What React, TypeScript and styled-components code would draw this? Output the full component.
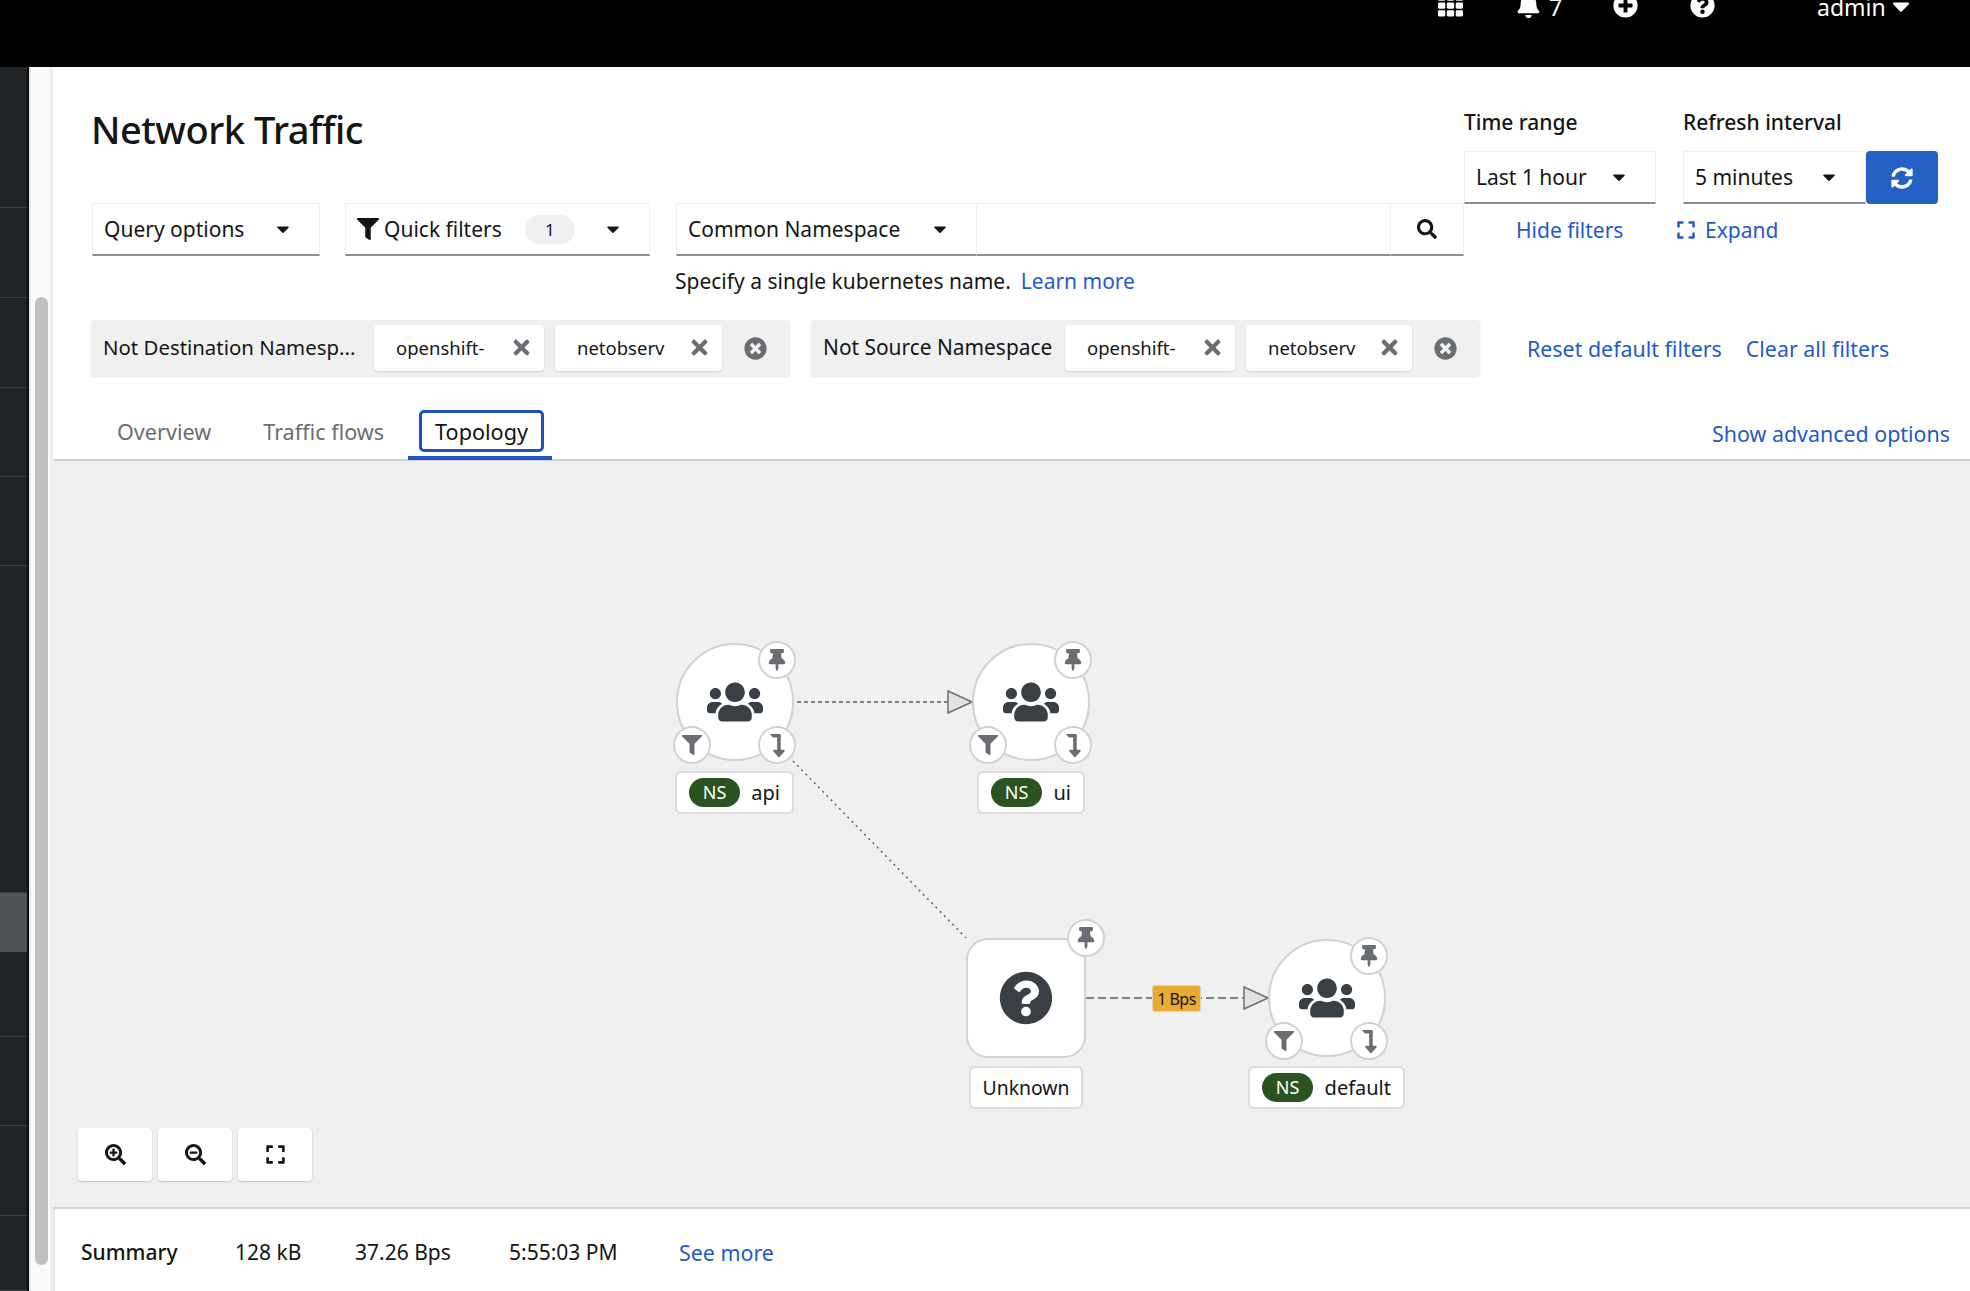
import { FC, ReactNode } from "react";
import styled, { createGlobalStyle } from "styled-components";
import {
  FaBell,
  FaCaretDown,
  FaExpand,
  FaFilter,
  FaLevelDownAlt,
  FaPlusCircle,
  FaQuestionCircle,
  FaSearch,
  FaSearchMinus,
  FaSearchPlus,
  FaSyncAlt,
  FaTh,
  FaThumbtack,
  FaTimes,
  FaTimesCircle,
  FaUsers,
} from "react-icons/fa";

const GlobalStyle = createGlobalStyle`
  html, body {
    margin: 0;
    padding: 0;
    height: 100%;
    overflow: hidden;
    background: #fff;
  }
  body {
    font-family: "Noto Sans", "Open Sans", sans-serif;
    font-size: 21px;
    color: #151515;
  }
  * { box-sizing: border-box; }
`;

const Page = styled.div`
  width: 1970px;
  height: 1291px;
  display: flex;
  flex-direction: column;
  overflow: hidden;
`;

const TopBar = styled.header`
  height: 67px;
  flex: none;
  background: #000;
  color: #fff;
  position: relative;
  overflow: hidden;
`;

const TopItems = styled.div`
  display: flex;
  align-items: center;
  height: 24px;
  margin-top: -7px;
  padding-left: 1438px;
`;

const TopIcon = styled.span<{ $w: number }>`
  width: ${(p) => p.$w}px;
  display: flex;
  align-items: center;
  font-size: 25px;
`;

const BellCount = styled.span`
  width: 64px;
  font-size: 23px;
  padding-top: 3px;
`;

const AdminName = styled.span`
  font-size: 23px;
  width: 70px;
  padding-top: 3px;
`;

const AdminCaret = styled(FaCaretDown)`
  font-size: 28px;
  flex: none;
  margin-top: 2px;
`;

const Body = styled.div`
  flex: 1;
  display: flex;
  min-height: 0;
`;

const SideNav = styled.nav`
  width: 29px;
  flex: none;
  background: #212427;
  border-right: 2px solid #0d0d0e;
  display: flex;
  flex-direction: column;
`;

const NavItem = styled.div<{ $h: number; $active?: boolean }>`
  height: ${(p) => p.$h}px;
  flex: none;
  background: ${(p) => (p.$active ? "#4f5255" : "transparent")};
  border-bottom: ${(p) => (p.$active ? "none" : "1px solid #3c3f42")};
`;

const ScrollTrack = styled.div`
  width: 24px;
  flex: none;
  background: #fafafa;
  border-left: 2px solid #e6e6e6;
  border-right: 3px solid #efefef;
  padding: 230px 2px 26px 4px;
`;

const ScrollThumb = styled.div`
  height: 968px;
  width: 13px;
  border-radius: 7px;
  background: #bfbfbf;
`;

const Main = styled.main`
  flex: 1;
  min-width: 0;
  display: flex;
  flex-direction: column;
`;

const Controls = styled.section`
  height: 394px;
  flex: none;
  position: relative;
  padding-left: 39px;
  display: flex;
`;

const LeftColumn = styled.div`
  width: 1372px;
  flex: none;
`;

const Title = styled.h1`
  margin: 0 0 0 -1px;
  height: 136px;
  padding-top: 38px;
  font-size: 38px;
  line-height: 48px;
  font-weight: 500;
  letter-spacing: -0.5px;
  color: #151515;
`;

const FilterRow = styled.div`
  display: flex;
`;

const SelectBox = styled.div<{ $w: number; $gap?: number }>`
  width: ${(p) => p.$w}px;
  flex: none;
  height: 53px;
  margin-right: ${(p) => p.$gap ?? 0}px;
  padding: 0 26px 0 11px;
  display: flex;
  align-items: center;
  justify-content: space-between;
  border: 1px solid #f0f0f0;
  border-bottom: 2px solid #8a8d90;
  background: #fff;
  white-space: nowrap;
`;

const FunnelLabel = styled.span`
  display: flex;
  align-items: center;
  gap: 5px;
`;

const CountBadge = styled.span`
  width: 50px;
  height: 29px;
  margin-right: 5px;
  border-radius: 15px;
  background: #f0f0f0;
  font-size: 17px;
  display: flex;
  align-items: center;
  justify-content: center;
`;

const Caret = styled(FaCaretDown)`
  font-size: 20px;
  flex: none;
`;

const SearchInput = styled.div`
  flex: 1;
  height: 53px;
  border-top: 1px solid #f0f0f0;
  border-bottom: 2px solid #8a8d90;
`;

const SearchButton = styled.div`
  width: 74px;
  flex: none;
  height: 53px;
  display: flex;
  align-items: center;
  justify-content: center;
  border: 1px solid #f0f0f0;
  border-bottom: 2px solid #8a8d90;
  font-size: 20px;
`;

const Hint = styled.div`
  margin: 12px 0 0 583px;
  line-height: 27px;
  display: flex;
  gap: 10px;
`;

const LinkText = styled.a`
  color: #1f5bc8;
  font-size: 21.4px;
  white-space: nowrap;
`;

const HintLink = styled(LinkText)`
  font-size: 21px;
`;

const RightColumn = styled.div`
  display: flex;
  gap: 27px;
  padding-top: 39px;
  align-items: flex-start;
`;

const RangeColumn = styled.div`
  display: flex;
  flex-direction: column;
`;

const RangeLabel = styled.label`
  height: 45px;
  line-height: 32px;
  font-weight: 500;
`;

const RangeRow = styled.div`
  display: flex;
`;

const RefreshButton = styled.div`
  width: 72px;
  height: 53px;
  background: #2560c4;
  border-radius: 4px;
  color: #fff;
  font-size: 22px;
  display: flex;
  align-items: center;
  justify-content: center;
`;

const RangeLink = styled.div<{ $indent: number }>`
  display: flex;
  align-items: center;
  gap: 9px;
  height: 52px;
  margin-left: ${(p) => p.$indent}px;
  color: #1f5bc8;
  svg {
    font-size: 20px;
  }
`;

const ChipRow = styled.div`
  position: absolute;
  left: 38px;
  top: 253px;
  display: flex;
  align-items: center;
`;

const ChipGroup = styled.div<{ $gap?: number }>`
  height: 56px;
  margin-right: ${(p) => p.$gap ?? 0}px;
  padding: 0 12px;
  display: flex;
  align-items: center;
  background: #f0f0f0;
  border-radius: 4px;
  box-shadow: 0 1px 2px rgba(0, 0, 0, 0.1);
`;

const ChipLabel = styled.span<{ $w: number; $size: number }>`
  width: ${(p) => p.$w}px;
  font-size: ${(p) => p.$size}px;
  padding-bottom: 2px;
  white-space: nowrap;
`;

const Chip = styled.div<{ $w: number }>`
  width: ${(p) => p.$w}px;
  height: 46px;
  margin-right: 11px;
  padding: 0 11px 2px 22px;
  display: flex;
  align-items: center;
  justify-content: space-between;
  background: #fff;
  border-radius: 4px;
  box-shadow: 0 1px 2px rgba(0, 0, 0, 0.15);
  font-size: 18.5px;
  svg {
    color: #6a6e73;
    font-size: 23px;
  }
`;

const ChipClear = styled(FaTimesCircle)`
  color: #6a6e73;
  font-size: 23px;
  margin: 0 11px;
`;

const ChipLinks = styled.div`
  margin-left: 47px;
  display: flex;
  gap: 24px;
`;

const TabBar = styled.div`
  height: 63px;
  position: absolute;
  left: 0;
  right: 0;
  bottom: 0;
  border-bottom: 2px solid #d2d2d2;
  padding: 5px 20px 0 64px;
  display: flex;
  align-items: center;
  justify-content: space-between;
`;

const TabList = styled.div`
  display: flex;
  align-items: center;
`;

const Tab = styled.div<{ $active?: boolean; $gap?: number }>`
  margin-right: ${(p) => p.$gap ?? 0}px;
  color: ${(p) => (p.$active ? "#151515" : "#6a6e73")};
  font-size: 21.6px;
  position: relative;
  height: 42px;
  line-height: ${(p) => (p.$active ? 38 : 44)}px;
  ${(p) =>
    p.$active &&
    `
    border: 3px solid #1f4fc1;
    border-radius: 5px;
    padding: 0 13px;
    &::after {
      content: "";
      position: absolute;
      left: -14px;
      right: -11px;
      bottom: -11px;
      height: 4px;
      background: #2357c4;
    }
  `}
`;

const AdvancedLink = styled(LinkText)`
  margin-top: 4px;
`;

const Canvas = styled.section`
  flex: 1;
  position: relative;
  background: #f0f0f0;
  min-height: 0;
`;

const EdgeLayer = styled.svg`
  position: absolute;
  left: 0;
  top: 0;
  width: 100%;
  height: 100%;
`;

const NodeShape = styled.div<{ $x: number; $y: number; $square?: boolean }>`
  position: absolute;
  left: ${(p) => p.$x}px;
  top: ${(p) => p.$y}px;
  width: ${(p) => (p.$square ? 120 : 118)}px;
  height: ${(p) => (p.$square ? 120 : 118)}px;
  border-radius: ${(p) => (p.$square ? "22px" : "50%")};
  border: 2px solid #d2d2d2;
  background: #fff;
  display: flex;
  align-items: center;
  justify-content: center;
  color: #393f44;
`;

const Decorator = styled.div<{ $x: number; $y: number }>`
  position: absolute;
  left: ${(p) => p.$x - 19}px;
  top: ${(p) => p.$y - 19}px;
  width: 38px;
  height: 38px;
  border-radius: 50%;
  border: 2px solid #d2d2d2;
  background: #fff;
  color: #6a6e73;
  display: flex;
  align-items: center;
  justify-content: center;
`;

const NodeLabel = styled.div<{ $x: number; $y: number; $w: number }>`
  position: absolute;
  left: ${(p) => p.$x}px;
  top: ${(p) => p.$y}px;
  width: ${(p) => p.$w}px;
  height: 43px;
  padding: 0 12px 1px;
  display: flex;
  align-items: center;
  justify-content: space-between;
  background: #fff;
  border: 2px solid #dcdcdc;
  border-radius: 6px;
  font-size: 20px;
  white-space: nowrap;
`;

const UnknownLabel = styled(NodeLabel)`
  justify-content: center;
  font-size: 19.4px;
`;

const NsPill = styled.span`
  width: 51px;
  height: 29px;
  border-radius: 15px;
  background: #2b5320;
  color: #fff;
  font-size: 18px;
  display: flex;
  align-items: center;
  justify-content: center;
`;

const EdgeTag = styled.div`
  position: absolute;
  left: 1099px;
  top: 524px;
  width: 49px;
  height: 27px;
  border-radius: 3px;
  background: #e8ac34;
  border: 1px solid #e3d6b4;
  font-size: 16px;
  letter-spacing: -0.5px;
  display: flex;
  align-items: center;
  justify-content: center;
  white-space: nowrap;
`;

const ZoomControls = styled.div`
  position: absolute;
  left: 25px;
  top: 667px;
  display: flex;
  gap: 6px;
`;

const ZoomButton = styled.div`
  width: 74px;
  height: 53px;
  background: #fff;
  border-radius: 4px;
  box-shadow: 0 1px 2px rgba(0, 0, 0, 0.2);
  display: flex;
  align-items: center;
  justify-content: center;
  font-size: 21px;
  color: #151515;
`;

const SummaryBar = styled.footer`
  height: 84px;
  flex: none;
  border-top: 2px solid #d2d2d2;
  border-left: 2px solid #e6e6e6;
  background: #fff;
  padding: 4px 0 0 26px;
  display: flex;
  align-items: center;
`;

const SummaryItem = styled.span<{ $w: number; $strong?: boolean }>`
  width: ${(p) => p.$w}px;
  font-weight: ${(p) => (p.$strong ? 500 : 400)};
  white-space: nowrap;
`;

const navHeights = [141, 90, 90, 89, 89, 327, 59, 85, 89, 90, 75];

const Select: FC<{ w: number; gap?: number; children: ReactNode }> = ({ w, gap, children }) => (
  <SelectBox $w={w} $gap={gap}>
    {children}
    <Caret />
  </SelectBox>
);

const NamespaceNode: FC<{ x: number; y: number }> = ({ x, y }) => (
  <>
    <NodeShape $x={x} $y={y}>
      <FaUsers size={56} />
    </NodeShape>
    <Decorator $x={x + 101} $y={y + 17}>
      <FaThumbtack size={22} />
    </Decorator>
    <Decorator $x={x + 16} $y={y + 102}>
      <FaFilter size={20} />
    </Decorator>
    <Decorator $x={x + 101} $y={y + 102}>
      <FaLevelDownAlt size={23} />
    </Decorator>
  </>
);

const NsLabel: FC<{ x: number; y: number; w: number; name: string }> = ({ x, y, w, name }) => (
  <NodeLabel $x={x} $y={y} $w={w}>
    <NsPill>NS</NsPill>
    {name}
  </NodeLabel>
);

export default function App() {
  return (
    <Page>
      <GlobalStyle />
      <TopBar>
        <TopItems>
          <TopIcon $w={78}>
            <FaTh />
          </TopIcon>
          <TopIcon $w={33}>
            <FaBell />
          </TopIcon>
          <BellCount>7</BellCount>
          <TopIcon $w={77}>
            <FaPlusCircle />
          </TopIcon>
          <TopIcon $w={127}>
            <FaQuestionCircle />
          </TopIcon>
          <AdminName>admin</AdminName>
          <AdminCaret />
        </TopItems>
      </TopBar>
      <Body>
        <SideNav>
          {navHeights.map((h, i) => (
            <NavItem key={i} $h={h} $active={i === 6} />
          ))}
        </SideNav>
        <ScrollTrack>
          <ScrollThumb />
        </ScrollTrack>
        <Main>
          <Controls>
            <LeftColumn>
              <Title>Network Traffic</Title>
              <FilterRow>
                <Select w={228} gap={25}>
                  Query options
                </Select>
                <SelectBox $w={305} $gap={26}>
                  <FunnelLabel>
                    <FaFilter size={22} />
                    Quick filters
                  </FunnelLabel>
                  <CountBadge>1</CountBadge>
                  <Caret />
                </SelectBox>
                <Select w={301}>Common Namespace</Select>
                <SearchInput />
                <SearchButton>
                  <FaSearch />
                </SearchButton>
              </FilterRow>
              <Hint>
                Specify a single kubernetes name. <HintLink>Learn more</HintLink>
              </Hint>
            </LeftColumn>
            <RightColumn>
              <RangeColumn>
                <RangeLabel>Time range</RangeLabel>
                <Select w={192}>Last 1 hour</Select>
                <RangeLink $indent={52}>Hide filters</RangeLink>
              </RangeColumn>
              <RangeColumn>
                <RangeLabel>Refresh interval</RangeLabel>
                <RangeRow>
                  <Select w={183}>5 minutes</Select>
                  <RefreshButton>
                    <FaSyncAlt />
                  </RefreshButton>
                </RangeRow>
                <RangeLink $indent={-7}>
                  <FaExpand />
                  Expand
                </RangeLink>
              </RangeColumn>
            </RightColumn>
            <ChipRow>
              <ChipGroup $gap={21}>
                <ChipLabel $w={271} $size={20.4}>
                  Not Destination Namesp...
                </ChipLabel>
                <Chip $w={170}>
                  openshift-
                  <FaTimes />
                </Chip>
                <Chip $w={167}>
                  netobserv
                  <FaTimes />
                </Chip>
                <ChipClear />
              </ChipGroup>
              <ChipGroup>
                <ChipLabel $w={242} $size={20.9}>
                  Not Source Namespace
                </ChipLabel>
                <Chip $w={170}>
                  openshift-
                  <FaTimes />
                </Chip>
                <Chip $w={166}>
                  netobserv
                  <FaTimes />
                </Chip>
                <ChipClear />
              </ChipGroup>
              <ChipLinks>
                <LinkText>Reset default filters</LinkText>
                <LinkText>Clear all filters</LinkText>
              </ChipLinks>
            </ChipRow>
            <TabBar>
              <TabList>
                <Tab $gap={52}>Overview</Tab>
                <Tab $gap={35}>Traffic flows</Tab>
                <Tab $active>Topology</Tab>
              </TabList>
              <AdvancedLink>Show advanced options</AdvancedLink>
            </TabBar>
          </Controls>
          <Canvas>
            <EdgeLayer>
              <line x1="744" y1="241" x2="895" y2="241" stroke="#5a5f63" strokeWidth="1.5" strokeDasharray="4 3" />
              <polygon points="895,230 919,241 895,252" fill="#e2e3e4" stroke="#6a6e73" strokeWidth="1.5" />
              <line x1="740" y1="300" x2="913" y2="477" stroke="#5a5f63" strokeWidth="1.5" strokeDasharray="2 4" />
              <line x1="1033" y1="537" x2="1191" y2="537" stroke="#5a5f63" strokeWidth="1.5" strokeDasharray="8 4" />
              <polygon points="1191,526 1215,537 1191,548" fill="#e2e3e4" stroke="#6a6e73" strokeWidth="1.5" />
            </EdgeLayer>
            <NamespaceNode x={623} y={182} />
            <NsLabel x={622} y={310} w={119} name="api" />
            <NamespaceNode x={919} y={182} />
            <NsLabel x={924} y={310} w={108} name="ui" />
            <NodeShape $x={913} $y={477} $square>
              <FaQuestionCircle size={54} />
            </NodeShape>
            <Decorator $x={1033} $y={477}>
              <FaThumbtack size={22} />
            </Decorator>
            <UnknownLabel $x={916} $y={605} $w={114}>
              Unknown
            </UnknownLabel>
            <EdgeTag>1 Bps</EdgeTag>
            <NamespaceNode x={1215} y={478} />
            <NsLabel x={1195} y={605} w={157} name="default" />
            <ZoomControls>
              <ZoomButton>
                <FaSearchPlus />
              </ZoomButton>
              <ZoomButton>
                <FaSearchMinus />
              </ZoomButton>
              <ZoomButton>
                <FaExpand />
              </ZoomButton>
            </ZoomControls>
          </Canvas>
          <SummaryBar>
            <SummaryItem $w={154} $strong>
              Summary
            </SummaryItem>
            <SummaryItem $w={120}>128 kB</SummaryItem>
            <SummaryItem $w={154}>37.26 Bps</SummaryItem>
            <SummaryItem $w={170}>5:55:03 PM</SummaryItem>
            <LinkText>See more</LinkText>
          </SummaryBar>
        </Main>
      </Body>
    </Page>
  );
}
